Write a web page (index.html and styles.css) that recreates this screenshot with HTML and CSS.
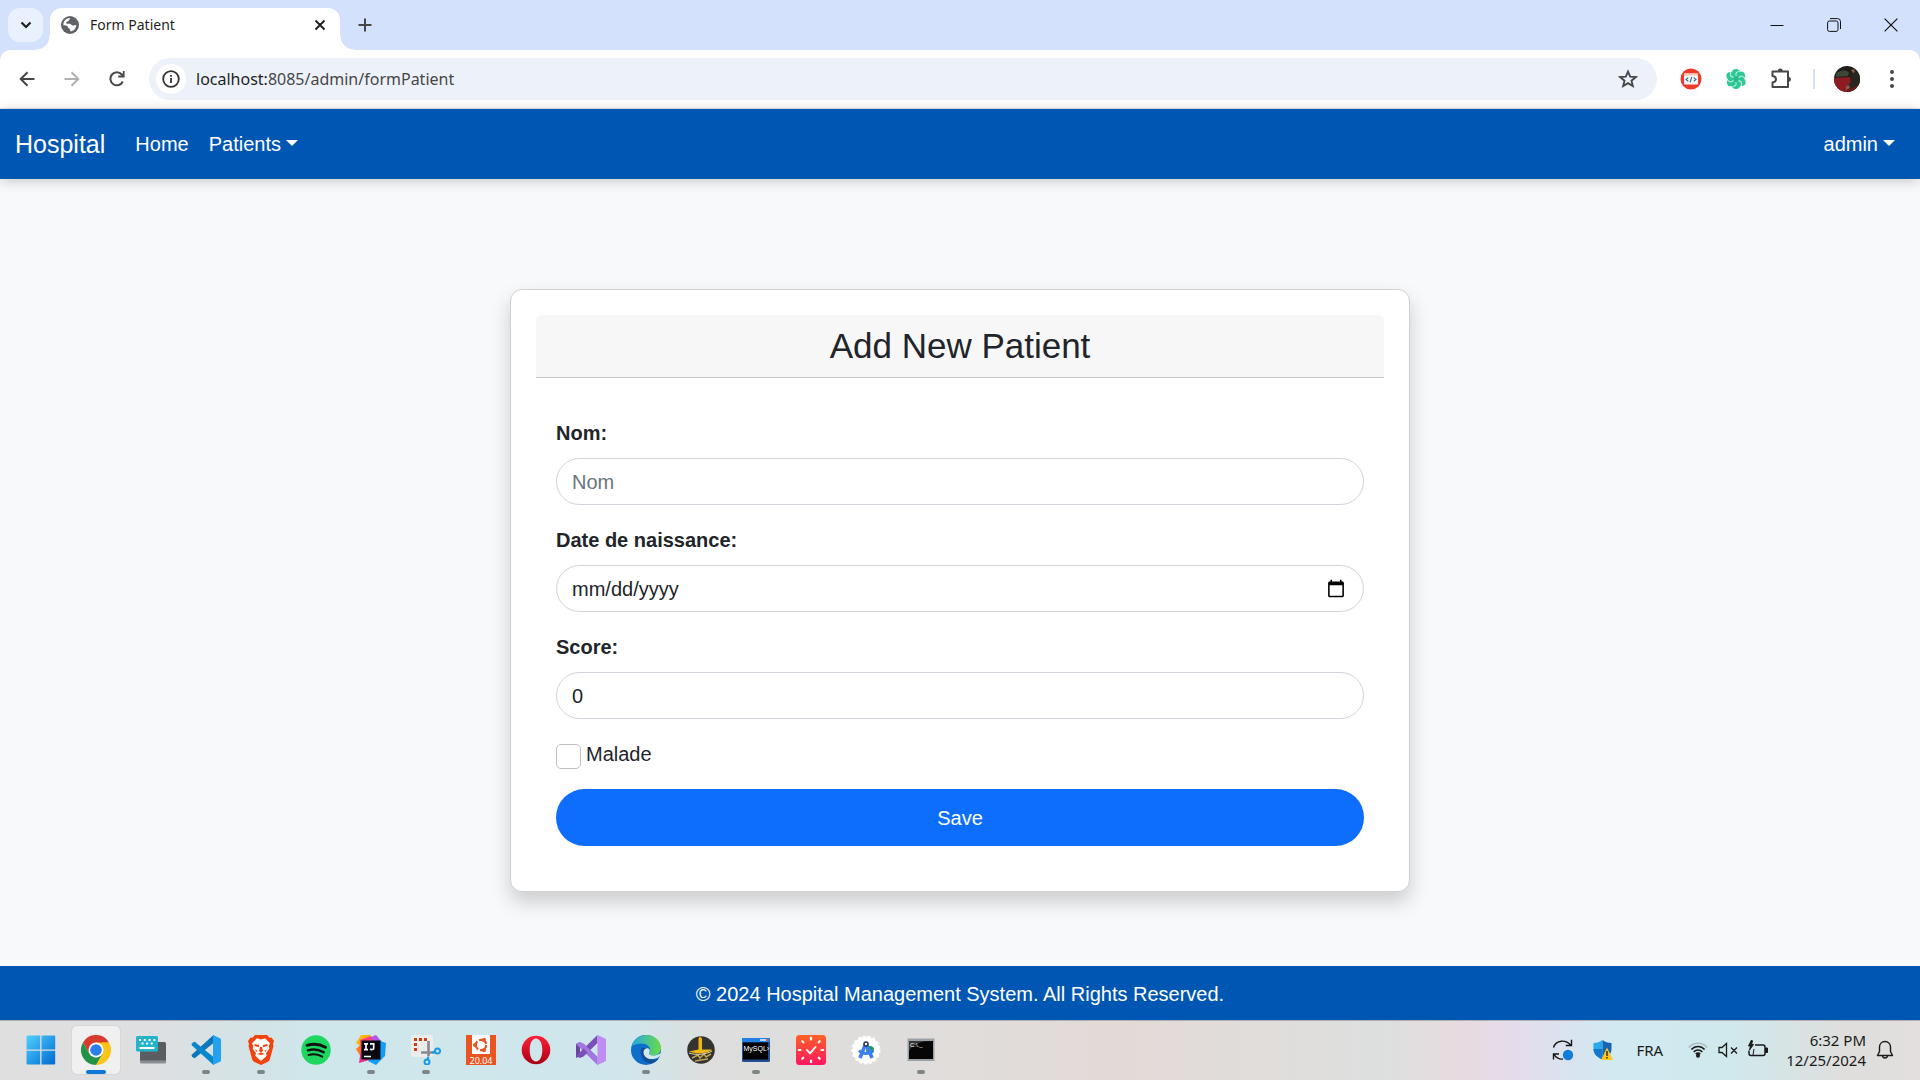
FILE: index.html
```html
<!DOCTYPE html>
<html lang="en-US">
<head>
<meta charset="utf-8">
<title>Form Patient</title>
<link rel="stylesheet" href="styles.css">
</head>
<body>
<div class="screen">

<header class="browser">
  <div class="tabstrip">
    <button class="tab-search" aria-label="Search tabs"><svg width="14" height="14" viewBox="0 0 14 14" fill="none" stroke="#1f1f1f" stroke-width="2.2"><path d="M2.5 4.5 7 9l4.500-4.500"/></svg></button>
    <div class="tab">
      <svg width="18" height="18" viewBox="0 0 18 18"><circle cx="9" cy="9" r="9" fill="#5f6368"/><path d="M9.200 2c-1 1.200-.4 2.200-1.800 3-1.600.9-2 .7-2.100 2 0 1.300 2 .7 3.400.8 1.400.1 1.300 1.500 2.800 1.700 1.600.2 2-.7 3.800-.6-.2 3.700-2.700 6.300-6.100 6.300.2-1.700-.2-2.300-1.400-3-1.300-.7-.6-2-2-2.500C4.200 9.100 3.200 9 2.400 9.300 2 5.400 5 2 9.200 2z" fill="#fff"/><path d="M11.500 2.600c1.900.9 3.300 2.500 3.600 4.500-1.100.5-2-.1-2.400-.9-.4-.8-1.500-.6-1.900-1.400-.3-.8.200-1.600.7-2.200z" fill="#5f6368"/></svg>
      <span class="tab-title">Form Patient</span>
      <button class="bare" aria-label="Close tab"><svg width="12" height="12" viewBox="0 0 12 12" stroke="#1f1f1f" stroke-width="1.900"><path d="M1.500 1.500l9 9M10.500 1.500l-9 9"/></svg></button>
    </div>
    <button class="bare new-tab" aria-label="New tab"><svg width="14" height="14" viewBox="0 0 14 14" stroke="#474747" stroke-width="2"><path d="M7 .5v13M.5 7h13"/></svg></button>
    <div class="window-buttons">
      <button class="bare" aria-label="Minimize"><svg width="14" height="14" viewBox="0 0 14 14" stroke="#111"><path d="M.5 7.500h13"/></svg></button>
      <button class="bare" aria-label="Restore"><svg width="14" height="14" viewBox="0 0 14 14" fill="none" stroke="#111"><rect x=".6" y="3" width="10.400" height="10.400" rx="1.800"/><path d="M3 .6h7.500a3 3 0 0 1 3 3V11"/></svg></button>
      <button class="bare" aria-label="Close"><svg width="14" height="14" viewBox="0 0 14 14" stroke="#111" stroke-width="1.200"><path d="M.6.6l12.800 12.800M13.400.6L.6 13.400"/></svg></button>
    </div>
  </div>
  <div class="toolbar">
    <div class="nav-buttons">
      <button class="bare" aria-label="Back"><svg width="16" height="16" viewBox="0 0 16 16" fill="none" stroke="#474747" stroke-width="2"><path d="M15.500 8H2M8.500 1.200L1.700 8l6.800 6.800"/></svg></button>
      <button class="bare" aria-label="Forward"><svg width="16" height="16" viewBox="0 0 16 16" fill="none" stroke="#b0b0b0" stroke-width="2"><path d="M.5 8H14M7.500 1.200L14.300 8l-6.800 6.800"/></svg></button>
      <button class="bare" aria-label="Reload"><svg width="16" height="16" viewBox="0 0 16 16"><path d="M13.800 10.500A6.500 6.500 0 1 1 12.800 3.500L14 4.800" fill="none" stroke="#474747" stroke-width="2"/><path d="M15.600 0v6.400H9.200V4.600h4.600V0z" fill="#474747"/></svg></button>
    </div>
    <div class="omnibox">
      <button class="site-info" aria-label="Site information"><svg width="18" height="18" viewBox="0 0 18 18"><circle cx="9" cy="9" r="7.800" fill="none" stroke="#333" stroke-width="1.800"/><path d="M8.100 8h1.800v5H8.100zM8.100 5h1.800v1.800H8.100z" fill="#333"/></svg></button>
      <span class="url"><span class="host">localhost:</span>8085/admin/formPatient</span>
      <button class="bare" aria-label="Bookmark"><svg width="20" height="20" viewBox="0 0 20 20" fill="none" stroke="#474747" stroke-width="1.900"><path d="M10 2.600l2.200 5 5.500.5-4.200 3.600 1.300 5.400L10 14.200l-4.800 2.900 1.300-5.400L2.300 8.100l5.500-.5z"/></svg></button>
    </div>
    <div class="extensions">
      <svg width="22" height="22" viewBox="0 0 22 22"><circle cx="11" cy="11" r="10.500" fill="#ee3a2a"/><rect x="4" y="5.500" width="14" height="11" rx="1" fill="#f4f7fa"/><path d="M4 5.500h14v2H4z" fill="#f7c9b9"/><path d="M8.300 9.600L6 11.500l2.300 1.900M13.700 9.600l2.300 1.900-2.300 1.900M11.800 8.800l-1.600 5.500" fill="none" stroke="#35648c" stroke-width="1.100"/></svg>
      <svg width="22" height="22" viewBox="0 0 22 22"><circle cx="11" cy="11" r="6.500" fill="#25ba8b"/><g fill="#2fc796"><ellipse cx="11" cy="4.800" rx="4.500" ry="3.800"/><ellipse cx="16.400" cy="7.900" rx="3.800" ry="4.500"/><ellipse cx="16.400" cy="14.100" rx="4.200" ry="4"/><ellipse cx="11" cy="17.200" rx="4.500" ry="3.800"/><ellipse cx="5.600" cy="14.100" rx="3.800" ry="4.500"/><ellipse cx="5.600" cy="7.900" rx="4.200" ry="4"/></g><g fill="none" stroke="#d5f6e9" stroke-width=".9"><path id="petal" d="M11 8V4.800l3-1.700c1-.3 2 0 2.800.7"/><use href="#petal" transform="rotate(60 11 11)"/><use href="#petal" transform="rotate(120 11 11)"/><use href="#petal" transform="rotate(180 11 11)"/><use href="#petal" transform="rotate(240 11 11)"/><use href="#petal" transform="rotate(300 11 11)"/></g></svg>
      <svg width="22" height="22" viewBox="0 0 22 22"><path d="M2.500 3.500h15.500v15.500H2.500v-4.500c2.300-.3 3.500-1.500 3.500-3.200S4.800 8.300 2.500 8z" fill="none" stroke="#474747" stroke-width="2" stroke-linejoin="round"/><path d="M7.800 3a2.500 2.500 0 0 1 5 0zM18.500 8.800a2.500 2.500 0 0 1 0 5z" fill="#474747"/></svg>
      <span class="divider"></span>
      <svg class="avatar" width="26" height="26" viewBox="0 0 26 26"><path d="M0 0h26v26H0z" fill="#221d1b"/><path d="M0 12l16-1 1 5-3 10H0z" fill="#8d1c21"/><path d="M15 21l11-4v9H13z" fill="#6e181b"/><path d="M2 7l7-3 6 2-1 4-12 1z" fill="#3d4638"/><path d="M16 8l6-3 4 4v9l-8 4-5 2-1-3 5-5z" fill="#252521"/><path d="M12 20l3-1 1 3-4 2zM17 4l3-1 1 3-2 1z" fill="#8c5b48"/></svg>
      <svg class="menu-dots" width="6" height="20" viewBox="0 0 6 20" fill="#474747"><circle cx="3" cy="3" r="2"/><circle cx="3" cy="10" r="2"/><circle cx="3" cy="17" r="2"/></svg>
    </div>
  </div>
</header>

<nav class="navbar">
  <a class="brand" href="#">Hospital</a>
  <a class="nav-link" href="#">Home</a>
  <a class="nav-link caret" href="#">Patients</a>
  <a class="nav-link caret user" href="#">admin</a>
</nav>

<main class="page">
  <section class="card">
    <h1 class="card-title">Add New Patient</h1>
    <form class="form">
      <div class="field">
        <label for="nom">Nom:</label>
        <input class="control" id="nom" type="text" placeholder="Nom">
      </div>
      <div class="field">
        <label for="date">Date de naissance:</label>
        <input class="control" id="date" type="date">
      </div>
      <div class="field">
        <label for="score">Score:</label>
        <input class="control" id="score" type="number" value="0">
      </div>
      <div class="check">
        <input id="malade" type="checkbox">
        <label for="malade">Malade</label>
      </div>
      <button class="save" type="submit">Save</button>
    </form>
  </section>
</main>

<footer class="footer">© 2024 Hospital Management System. All Rights Reserved.</footer>

<div class="taskbar">
  <div class="apps">
    <button class="app" aria-label="Start"><svg width="30" height="30" viewBox="0 0 30 30"><defs><linearGradient id="win" x1="0" y1="0" x2="1" y2="1"><stop offset="0" stop-color="#50d0ff"/><stop offset="1" stop-color="#0069d0"/></linearGradient></defs><path d="M1.500.5h12.700v14H.5v-13a1 1 0 0 1 1-1zM15.500.5h12.700a1 1 0 0 1 1 1v13H15.500zM.5 15.700h13.700v13.800H1.500a1 1 0 0 1-1-1zM15.500 15.700h13.700v12.800a1 1 0 0 1-1 1H15.500z" fill="url(#win)"/></svg></button>
    <button class="app active" aria-label="Chrome"><svg width="30" height="30" viewBox="0 0 30 30"><path d="M15 15L2 7.500A15 15 0 0 1 28 7.500z" fill="#d93a2e"/><path d="M28 7.500A15 15 0 0 1 15 30l6.500-11.300V7.500z" fill="#fcc418"/><path d="M15 7.500h13L21.500 19z" fill="#fcc418"/><path d="M2 7.500l6.500 11.200L13 15l2-7.500z" fill="#d93a2e"/><path d="M2 7.500l6.500 11.200 6.500 3.800 6.500-3.800L15 30A15 15 0 0 1 2 7.500z" fill="#229346"/><circle cx="15" cy="15" r="7.500" fill="#fff"/><circle cx="15" cy="15" r="5.800" fill="#2b7de9"/></svg></button>
    <button class="app" aria-label="Touch keyboard"><svg width="30" height="30" viewBox="0 0 30 30"><rect x="4" y="7" width="26" height="21" rx="1.500" fill="#5a5e62"/><path d="M4 25.500h26V27a1.500 1.500 0 0 1-1.500 1.500h-23A1.500 1.500 0 0 1 4 27z" fill="#8b8f93"/><rect y="1" width="22" height="15.500" rx="1.500" fill="#25b3cc"/><g stroke="#fff" stroke-width="2"><path d="M3 5h17" stroke-dasharray="2 2.800"/><path d="M5.500 8.600h12" stroke-dasharray="2 2.600"/><path d="M3.500 13H18.500"/></g></svg></button>
    <button class="app running" aria-label="Visual Studio Code"><svg width="30" height="30" viewBox="0 0 30 30"><path d="M22.500 0L1 19.500a1.500 1.500 0 0 0 0 2l1.500 1.300a1.500 1.500 0 0 0 1.800 0L22.500 8z" fill="#0b74ba"/><path d="M22.500 30L1 10.500a1.500 1.500 0 0 1 0-2l1.500-1.300a1.500 1.500 0 0 1 1.800 0L22.500 22z" fill="#0a86cc"/><path d="M22 0l7 3.200c.6.300 1 .8 1 1.500v20.600c0 .7-.4 1.200-1 1.500L22 30z" fill="#25a1ef"/></svg></button>
    <button class="app running" aria-label="Brave"><svg width="30" height="30" viewBox="0 0 30 30"><path d="M9 0h12l2.500 2.800 2-.3L28 6l-1 3 .5 2-3.700 13.500c-.3 1-1 1.700-1.800 2.200L15 30l-7-3.300c-.8-.5-1.500-1.200-1.800-2.200L2.500 11 3 9 2 6l2.500-3.500 2 .3z" fill="#f4420f"/><path d="M15 4.500l4-1.200 5 5-1.300 2.700.6 2.800-3.300 4.400.8 2.600L15 26l-5.800-5.200.8-2.600-3.300-4.400.6-2.800L6 8.300l5-5z" fill="#fff"/><path d="M8.500 9l4.500 1v2.300L8.600 11zM21.500 9L17 10v2.300l4.400-1.300zM14 12h2l1 4-2 1.500-2-1.500zM11 19l4-1.500 4 1.500-4 1zM9 14l2.500 2-1 1zM21 14l-2.500 2 1 1z" fill="#f4420f"/></svg></button>
    <button class="app" aria-label="Spotify"><svg width="30" height="30" viewBox="0 0 30 30"><circle cx="15" cy="15" r="14.700" fill="#1ed760"/><g fill="none" stroke="#10130f" stroke-linecap="round"><path d="M6 10.300c6-1.800 13-1.200 18.500 2" stroke-width="2.900"/><path d="M6.800 15.300c5.500-1.500 11.200-.9 16 1.900" stroke-width="2.400"/><path d="M7.500 20c4.800-1.200 9.500-.7 13.700 1.700" stroke-width="2"/></g></svg></button>
    <button class="app running" aria-label="IntelliJ IDEA"><svg width="30" height="30" viewBox="0 0 30 30"><path d="M0 8L5 0h10l-4 16z" fill="#fdb60d"/><path d="M15 2l5-2 5 6-10 10z" fill="#b454e8"/><path d="M0 14l10-9 8 12L5 22z" fill="#fb7b1f"/><path d="M4 5L15 1l4 11-14 5z" fill="#fe3d86"/><path d="M22 5l8 3-1 13-9 9-8-4z" fill="#149df5"/><path d="M3 28l2-14 12 10z" fill="#e8308f"/><rect x="5.500" y="5.500" width="19" height="19" fill="#080810"/><g fill="none" stroke="#fff" stroke-width="1.700"><path d="M8 8.800h4M10 8.800v6M8 14.600h4M14 8.800h3.700v4.500c0 1.300-2.500 1.800-3.500.4M8 21.500h7"/></g></svg></button>
    <button class="app running" aria-label="Snipping Tool"><svg width="30" height="30" viewBox="0 0 30 30"><rect width="22" height="22" rx="2" fill="#ececec"/><path d="M4.500 16V4.500H16" fill="none" stroke="#cf3c10" stroke-width="3" stroke-dasharray="3 2"/><path d="M17.500 6v15M10 17.500h14" stroke="#858b90" stroke-width="2.600"/><g fill="none" stroke="#1a9be6" stroke-width="2"><circle cx="26.500" cy="16" r="2.500"/><circle cx="16" cy="27" r="2.500"/><path d="M24 16.500l-3 1M16.500 24.500l1-3"/></g></svg></button>
    <button class="app" aria-label="Ubuntu 20.04"><svg width="30" height="30" viewBox="0 0 30 30"><path d="M0 0h30v30H0z" fill="#e95420"/><path d="M6 0h18v19H6z" fill="#fff"/><circle cx="15" cy="10" r="5.200" fill="none" stroke="#e95420" stroke-width="2.200" stroke-dasharray="9 1.900"/><circle cx="9" cy="10" r="2" fill="#e95420"/><circle cx="18" cy="4.800" r="2" fill="#e95420"/><circle cx="18" cy="15.200" r="2" fill="#e95420"/><text x="15" y="29" text-anchor="middle" class="icon-version">20.04</text></svg></button>
    <button class="app" aria-label="Opera"><svg width="30" height="30" viewBox="0 0 30 30"><defs><linearGradient id="op" x1="0" y1="0" x2="0" y2="1"><stop offset="0" stop-color="#ff2038"/><stop offset="1" stop-color="#a80014"/></linearGradient></defs><path fill-rule="evenodd" d="M15 .7a14.300 14.300 0 1 0 0 28.600 14.300 14.300 0 0 0 0-28.600zm0 2.800c4 0 6.300 5 6.300 11.500S19 26.500 15 26.500 8.700 21.500 8.700 15 11 3.500 15 3.500z" fill="url(#op)"/></svg></button>
    <button class="app" aria-label="Visual Studio"><svg width="30" height="30" viewBox="0 0 30 30"><path d="M0 9l4-2v14l-4 2z" fill="#6a45a3"/><path d="M4 7l3.500 1.500L21.500 22v8L0 9z" fill="#a277df"/><path d="M4 23L0 21 21.500 0v8L7.500 21.500z" fill="#7b4fb8"/><path d="M3.500 8.500L21.500 30v-8L8 9z" fill="#a277df"/><path d="M21.500 0L30 4v22l-8.500 4z" fill="#c08bf3"/></svg></button>
    <button class="app running" aria-label="Edge"><svg width="30" height="30" viewBox="0 0 30 30"><defs><linearGradient id="ed" x1="0" y1="0" x2="1" y2="0"><stop offset="0" stop-color="#25a7e5"/><stop offset="1" stop-color="#6bdc45"/></linearGradient></defs><circle cx="15" cy="15" r="15" fill="#0c70ca"/><path d="M.5 11C3 4 9 0 15.500 0 24 0 30 6.500 30 13c0 5-4 7.500-8 7.500-2.500 0-4-1-3.800-2 .2-1 1-1.500 1-3.500 0-3.500-3.500-6.500-8.700-6.500-4 0-8 1.500-10 2.500z" fill="url(#ed)"/><path d="M10.500 13c-3 6 2 16 10 15.500 3-.5 6-3 7.500-5-5 2.500-10.500 1-12.300-2.200-1.500-2.500-1-5 .5-6.500-1.500-2-4.200-2.500-5.700-1.800z" fill="#124f94"/><path d="M12.500 17c.3-3 3-4.200 5-3.500 1.800 1 1.500 3 .7 4.500-.6 1.300 1 2.500 3.800 2.500 2.200 0 5-.6 8-2.500 0 2-3 6-8 6-6 .8-9.500-3-9.500-7z" fill="#d5e8ec"/></svg></button>
    <button class="app" aria-label="Prayer times"><svg width="30" height="30" viewBox="0 0 30 30"><circle cx="15" cy="15" r="13.800" fill="#34332f"/><path d="M14 1.500l2 2v11h10c-3 4-15 5-23 2l9.500-2v-11z" fill="#f0b80f"/><path d="M6 23l6-3 2 3 4-4 2 3 5-3M9 26l6-1 7-1" fill="none" stroke="#c0a454" stroke-width="1.500"/><path d="M3 18c6 2 16 2 23-2" fill="none" stroke="#e7dcb4"/></svg></button>
    <button class="app running" aria-label="MySQL console"><svg width="30" height="30" viewBox="0 0 30 30"><rect x="1" y="3" width="28" height="24" rx="1.500" fill="#254f93"/><path d="M1 3h28v4H1z" fill="#2182e4"/><path d="M19 4h6v2h-6z" fill="#b6d8fa"/><path d="M25 4h2.500v2H25z" fill="#ed5d48"/><path d="M2 7.500h25v17H2z" fill="#000"/><text x="2.500" y="15.500" class="icon-console">MySQL›</text></svg></button>
    <button class="app" aria-label="Clock"><svg width="30" height="30" viewBox="0 0 30 30"><defs><linearGradient id="ck" x1="0" y1="0" x2="0" y2="1"><stop offset="0" stop-color="#ff6226"/><stop offset="1" stop-color="#ff155f"/></linearGradient></defs><rect width="30" height="30" rx="3.500" fill="url(#ck)"/><g stroke="#fff" stroke-width="2.200" stroke-linecap="round"><path d="M15 2.800v1.600M15 25.600v1.600M2.800 15h1.600M25.600 15h1.600M6.300 6.300l1 1M23.700 6.300l-1 1M6.300 23.700l1-1M23.700 23.700l-1-1"/><path d="M11 15l3 3.300 5.500-6.300" fill="none" stroke-width="1.900"/></g></svg></button>
    <button class="app" aria-label="Android Studio"><svg width="30" height="30" viewBox="0 0 30 30"><circle cx="15" cy="15" r="13.300" fill="#fff"/><circle cx="15" cy="15" r="13.500" fill="none" stroke="#fff" stroke-width="2" stroke-dasharray="3 2"/><circle cx="19" cy="15" r="4" fill="#229a55"/><path d="M15 8L9 23M15 8l6 15" stroke="#3d7ff0" stroke-width="3.600"/><path d="M8 15.500c4 4 10 4 14 0" fill="none" stroke="#3d7ff0" stroke-width="2.800"/><circle cx="15" cy="9" r="2" fill="#fff" stroke="#25364e" stroke-width="1.500"/></svg></button>
    <button class="app running" aria-label="Command Prompt"><svg width="30" height="30" viewBox="0 0 30 30"><rect x="1.500" y="3.500" width="27" height="22.500" fill="#9ca1a5"/><path d="M3 6h24v18H3z" fill="#060606"/><path d="M3 6h24c-12 0-20 3-24 10z" fill="#373737"/><text x="4" y="11.500" class="icon-prompt">C:\._</text></svg></button>
  </div>
  <div class="tray">
    <svg width="22" height="22" viewBox="0 0 22 22"><path d="M1.500 8.500C4 .5 14 .5 18.500 6M19.500.8v5.700h-5.700M1.500 20.500v-5.500h5.500M2 15.300C4 18.500 7 20.500 11 20" fill="none" stroke="#151515" stroke-width="1.400"/><circle cx="16" cy="16" r="5.200" fill="#0e7cd8"/></svg>
    <svg width="20" height="22" viewBox="0 0 20 22"><path d="M9.500 1C7 3 4 4 .5 4v6c0 5 4 8.500 9 10.500V1z" fill="#28a9e9"/><path d="M9.500 1C12 3 15 4 18.500 4v6c0 5-4 8.500-9 10.500V1z" fill="#1764b4"/><path d="M.5 10c0 5 4 8.500 9 10.500V10z" fill="#1279cc"/><path d="M14 8.500l6 12.500H8z" fill="#ffc61a"/><path d="M14 12v5M14 18v1.600" stroke="#3b2c00" stroke-width="1.500"/></svg>
    <span class="lang">FRA</span>
    <div class="status">
      <svg width="20" height="20" viewBox="0 0 20 20" fill="none" stroke="#1a1a1a" stroke-width="1.600"><path d="M.8 7.600C5.500 1.800 14.500 1.800 19.200 7.600" stroke="#adbcc0"/><path d="M3.400 9.600c3.500-4.200 9.700-4.200 13.200 0M5.700 12c2.300-2.700 6.300-2.700 8.600 0M7.800 14.200c1.200-1.400 3.200-1.400 4.400 0"/><circle cx="10" cy="15.700" r="1.200" fill="#1a1a1a"/></svg>
      <svg width="20" height="20" viewBox="0 0 20 20" fill="none" stroke="#1a1a1a" stroke-width="1.300"><path d="M1 7.500h3l4.500-4v13l-4.500-4H1zM13 7.500l6 6M19 7.500l-6 6"/></svg>
      <svg width="20" height="20" viewBox="0 0 20 20" fill="none" stroke="#1a1a1a" stroke-width="1.500"><path d="M7 5h8a2 2 0 0 1 2 2v6.500a2 2 0 0 1-2 2H3a2 2 0 0 1-2-2v-3"/><path d="M17.500 8h2v4.500h-2zM3.500 0L.5 6h2L1.500 10l4-5.500h-2L4.500 1zM5 15l1-6" fill="#1a1a1a" stroke-width="1"/></svg>
    </div>
    <div class="clock"><span>6:32 PM</span><span>12/25/2024</span></div>
    <svg width="18" height="20" viewBox="0 0 18 20" fill="none" stroke="#1a1a1a" stroke-width="1.400" stroke-linejoin="round"><path d="M9 1.500c-3.300 0-5.500 2.500-5.500 5.500v4.500L1.500 15.500h15l-2-4V7c0-3-2.200-5.500-5.500-5.500zM6.500 15.800c.3 3 4.700 3 5 0"/></svg>
  </div>
</div>

</div>
</body>
</html>
```
FILE: styles.css
```css
* { box-sizing: border-box; }

body {
  margin: 0;
  font-family: "Liberation Sans", Arial, sans-serif;
  font-size: 20px;
  line-height: 30px;
  color: #212529;
  background: #f8f9fa;
}

button, input { font: inherit; color: inherit; }
svg { display: block; flex: none; }
a { color: inherit; text-decoration: none; }

.screen {
  display: flex;
  flex-direction: column;
  min-height: 100vh;
}

.bare {
  display: grid;
  place-items: center;
  padding: 0;
  border: 0;
  background: none;
}

/* Browser window */
.browser {
  font-family: "Noto Sans", "Open Sans", sans-serif;
  background: #d3e1fd;
}

.tabstrip {
  display: flex;
  height: 50px;
  padding: 8px 1px 0 8px;
  align-items: flex-start;
}

.tab-search {
  display: grid;
  place-items: center;
  width: 35px;
  height: 34px;
  margin-right: 7px;
  padding: 0;
  border: 0;
  border-radius: 12px;
  background: #eaf1fe;
}

.tab {
  position: relative;
  display: flex;
  align-items: center;
  gap: 11px;
  width: 290px;
  height: 42px;
  padding: 0 14px 8px 11px;
  border-radius: 12px 12px 0 0;
  background: #fff;
  color: #1f1f1f;
  font-size: 14px;
  line-height: 20px;
}

.tab::before,
.tab::after {
  content: "";
  position: absolute;
  bottom: 0;
  width: 14px;
  height: 14px;
}

.tab::before {
  right: 100%;
  background: radial-gradient(circle at 0 0, transparent 13px, #fff 14px);
}

.tab::after {
  left: 100%;
  background: radial-gradient(circle at 100% 0, transparent 13px, #fff 14px);
}

.tab-title { flex: 1; }

.new-tab {
  width: 34px;
  height: 34px;
  margin-left: 8px;
}

.window-buttons {
  display: flex;
  margin-left: auto;
}

.window-buttons .bare {
  width: 57px;
  height: 34px;
}

.toolbar {
  display: flex;
  align-items: center;
  height: 59px;
  padding: 0 25px 0 19px;
  border-bottom: 1px solid #dfe1e6;
  border-radius: 10px 10px 0 0;
  background: #fff;
}

.nav-buttons {
  display: flex;
  gap: 29px;
  margin-right: 24px;
}

.omnibox {
  display: flex;
  flex: 1;
  align-items: center;
  height: 42px;
  padding: 0 19px 0 7px;
  border-radius: 21px;
  background: #ecf1fa;
}

.site-info {
  display: grid;
  place-items: center;
  width: 30px;
  height: 30px;
  padding: 0;
  border: 0;
  border-radius: 50%;
  background: #fff;
}

.url {
  flex: 1;
  padding-left: 10px;
  color: #474747;
  font-size: 16px;
}

.host { color: #1f1f1f; }

.extensions {
  display: flex;
  align-items: center;
  gap: 23px;
  margin-left: 23px;
}

.divider {
  width: 2px;
  height: 20px;
  margin: 0 -4px 0 -2px;
  background: #d3e1fd;
}

.avatar { border-radius: 50%; }

.menu-dots { margin-left: 6px; }

/* Site navigation */
.navbar {
  position: relative;
  display: flex;
  align-items: center;
  height: 70px;
  padding: 0 15px;
  background: #0056b3;
  color: #fff;
  box-shadow: 0 2px 12px rgba(0, 0, 0, .2);
}

.brand {
  margin-right: 20px;
  font-size: 25px;
}

.nav-link { padding: 0 10px; }

.caret::after {
  content: "";
  display: inline-block;
  margin-left: 5px;
  vertical-align: 5px;
  border-top: 6px solid;
  border-right: 6px solid transparent;
  border-left: 6px solid transparent;
}

.user { margin-left: auto; }

/* Form card */
.page {
  flex: 1;
  padding: 110px 20px 72px;
}

.card {
  width: 100%;
  max-width: 900px;
  margin: 0 auto;
  padding: 25px;
  border: 1px solid #cfd1d3;
  border-radius: 12px;
  background: #fff;
  box-shadow: 0 10px 20px rgba(0, 0, 0, .18);
}

.card-title {
  margin: 0;
  padding: 10px 20px;
  border-bottom: 1px solid #c8c9ca;
  border-radius: 6px 6px 0 0;
  background: #f7f7f7;
  font-size: 35px;
  font-weight: 400;
  line-height: 42px;
  text-align: center;
}

.form {
  display: flex;
  flex-direction: column;
  gap: 20px;
  padding: 40px 20px 20px;
}

.field {
  display: flex;
  flex-direction: column;
  gap: 10px;
}

.field label { font-weight: 700; }

.control {
  width: 100%;
  height: 47px;
  padding: 1px 15px 0;
  border: 1px solid #ced4da;
  border-radius: 24px;
  background: #fff;
  outline: 0;
}

.control::placeholder { color: #6c757d; }

.control::-webkit-datetime-edit-month-field,
.control::-webkit-datetime-edit-day-field,
.control::-webkit-datetime-edit-year-field {
  padding: 0;
}

.check {
  display: flex;
  align-items: flex-start;
  gap: 5px;
}

.check input {
  appearance: none;
  width: 25px;
  height: 25px;
  margin: 5px 0 0;
  border: 1px solid #bfbfbf;
  border-radius: 5px;
  background: #fff;
}

.save {
  height: 57px;
  padding: 0 20px;
  border: 0;
  border-radius: 29px;
  background: #0d6efd;
  color: #fff;
}

.footer {
  padding: 13px 20px 11px;
  background: #0056b3;
  color: #fff;
  text-align: center;
}

/* Desktop taskbar */
.taskbar {
  display: flex;
  justify-content: space-between;
  height: 60px;
  padding: 5px 26px 6px 17px;
  border-top: 1px solid #aeb2b6;
  background: linear-gradient(90deg, #e0dfe0 0, #dddfe1 8%, #cfe6ea 16%, #cfe7ec 32%, #dddedd 37%, #e0dddb 50%, #e3dad7 58%, #e0dddb 66%, #dddfdf 72%, #e8dbe0 76%, #e4dcec 79%, #d2e9f2 84%, #cfe9ec 90%, #dfdedd 96%, #e2dfdd 100%);
  color: #1a1a1a;
  font-family: "Noto Sans", "Open Sans", sans-serif;
  font-size: 15px;
  line-height: 20px;
}

.apps {
  display: flex;
  gap: 7px;
}

.app {
  position: relative;
  display: grid;
  place-items: center;
  width: 48px;
  height: 48px;
  padding: 0;
  border: 0;
  border-radius: 5px;
  background: none;
}

.app.active {
  background: #f0f0f1;
  box-shadow: 0 0 0 1px #d6d6d8;
}

.app.active::after,
.app.running::after {
  content: "";
  position: absolute;
  bottom: 0;
  left: 20px;
  width: 8px;
  height: 4px;
  border-radius: 2px;
  background: #7d8687;
}

.app.active::after {
  left: 14px;
  width: 20px;
  background: #0f78d4;
}

.icon-version {
  fill: #fff;
  font-family: "Noto Sans", sans-serif;
  font-size: 9px;
}

.icon-console,
.icon-prompt {
  fill: #fff;
  font-family: "Liberation Sans", sans-serif;
  font-size: 7px;
}

.icon-prompt { font-size: 6px; }

.tray {
  display: flex;
  align-items: center;
}

.lang { margin: 0 25px 0 23px; }

.tray svg + svg { margin-left: 19px; }

.status {
  display: flex;
  gap: 10px;
}

.tray .status svg { margin-left: 0; }

.clock {
  display: flex;
  flex-direction: column;
  margin: 0 10px 0 18px;
  text-align: right;
}
```
